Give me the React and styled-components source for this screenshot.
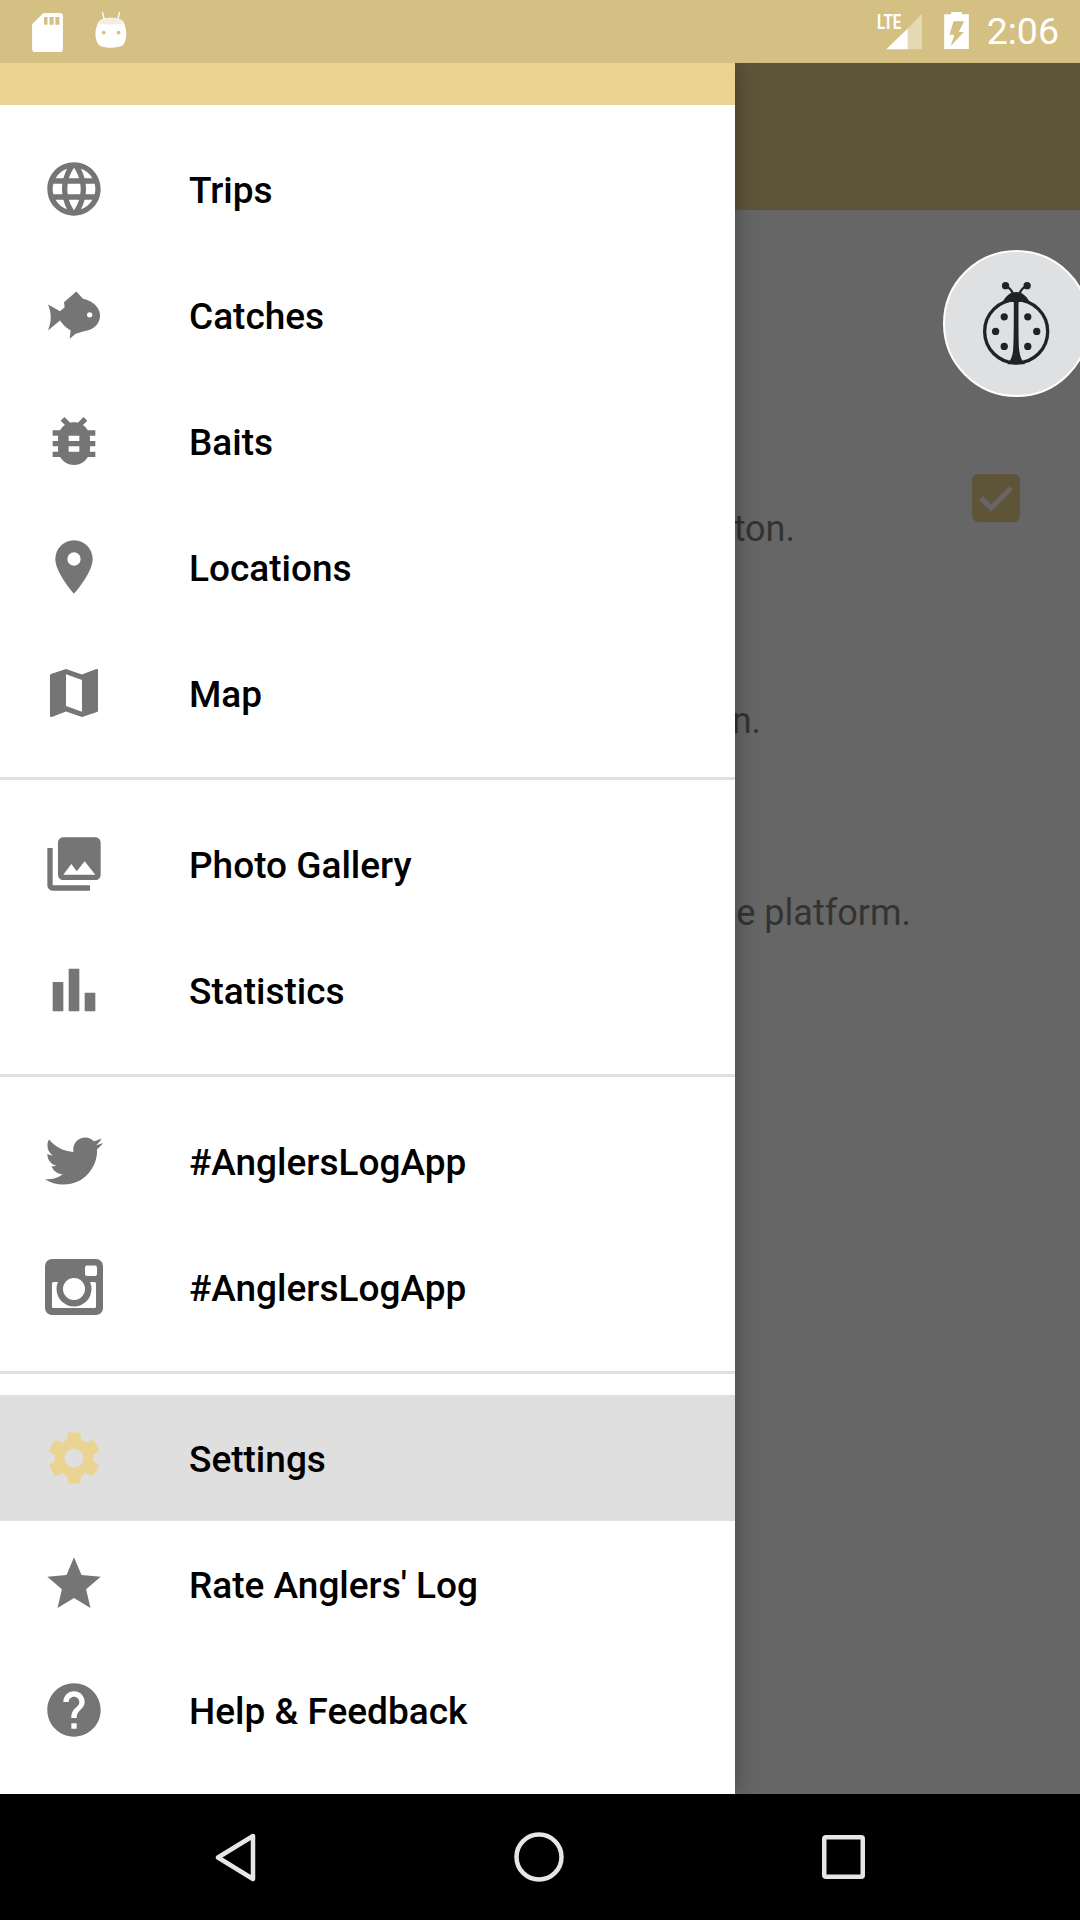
import React from "react";
import styled, { createGlobalStyle } from "styled-components";
import {
  MdLanguage, MdBugReport, MdPlace, MdMap, MdPhotoLibrary, MdBarChart, MdSettings, MdStar, MdHelp,
} from "react-icons/md";
import { FaTwitter } from "react-icons/fa";

const Global = createGlobalStyle`
  html, body { margin: 0; padding: 0; background: #000; }
  body { font-family: Roboto, "Liberation Sans", sans-serif; }
  * { box-sizing: border-box; }
`;

const Screen = styled.div`
  width: 1080px; height: 1920px; display: flex; flex-direction: column; overflow: hidden;
`;
const StatusBar = styled.header`
  flex: 0 0 63px; height: 63px; background: #d4c083; display: flex; align-items: flex-start;
  color: #fff; position: relative;
`;
const LeftIcons = styled.div`
  display: flex; align-items: flex-start; gap: 32px; padding: 11px 0 0 32px;
`;
const RightIcons = styled.div`
  margin-left: auto; display: flex; align-items: flex-start; padding: 11px 21px 0 0;
`;
const Time = styled.span`
  font-size: 37.5px; line-height: 42px; margin-left: 18px; margin-top: -1px; font-weight: 400;
`;
const Main = styled.div`
  flex: 1; display: flex; min-height: 0; overflow: hidden;
`;
const Drawer = styled.nav`
  flex: 0 0 735px; background: #fff; display: flex; flex-direction: column; position: relative; z-index: 2;
  box-shadow: 0 0 22px rgba(0, 0, 0, 0.32);
`;
const DrawerHeader = styled.div`
  flex: 0 0 42px; background: #ebd391;
`;
const Section = styled.div`
  padding: 21px 0;
  &:not(:last-child) { border-bottom: 3px solid #e0e0e0; }
`;
const Row = styled.div`
  height: 126px; display: flex; align-items: center; background: ${(p) => (p.$active ? "#dfdfdf" : "transparent")};
`;
const IconSlot = styled.div`
  flex: 0 0 147px; height: 100%; display: flex; align-items: center; justify-content: center;
  color: ${(p) => (p.$active ? "#ebd391" : "#757575")};
`;
const Label = styled.span`
  margin-left: 42px; margin-top: 4px; font-size: 37px; font-weight: 500; color: #000; line-height: 42px; white-space: nowrap;
`;
const Backdrop = styled.section`
  flex: 1; display: flex; flex-direction: column; background: #666; position: relative; min-width: 0;
`;
const Toolbar = styled.div`
  flex: 0 0 147px; background: #5e5539;
`;
const Content = styled.div`
  display: flex; flex-direction: column; padding-top: 262px;
`;
const ContentRow = styled.div`
  height: 192px; display: flex; align-items: flex-start;
`;
const Clipped = styled.div`
  flex: 0 0 ${(p) => p.$w}px; width: ${(p) => p.$w}px; overflow: hidden; display: flex; justify-content: flex-end;
  margin-top: 36px; font-size: 36px; line-height: 42px; color: #333; white-space: nowrap;
`;
const Checkbox = styled.div`
  position: absolute; top: 411px; left: 237px; width: 48px; height: 48px; border-radius: 6px; background: #5e5539;
  display: flex; align-items: center; justify-content: center;
`;
const Fab = styled.div`
  position: absolute; top: 187px; right: -10px; width: 147px; height: 147px; border-radius: 50%;
  background: #dfe0e2; border: 2px solid #fff; display: flex; align-items: center; justify-content: center;
`;
const NavBar = styled.footer`
  flex: 0 0 126px; background: #000; display: flex; align-items: center; justify-content: center; gap: 258px;
`;

const Fish = () => (
  <svg width="60" height="57" viewBox="70 20 180 170">
    <path d="M82 72 L118 92 L132 80 L130 65 L167 33 L187 55 C218 62 238 82 238 105 C238 132 218 148 190 152 L165 160 L147 175 L150 150 C136 142 126 132 118 120 L82 150 C92 125 94 100 82 72 Z" fill="currentColor" />
    <circle cx="207" cy="103" r="8" fill="#fff" />
  </svg>
);
const Instagram = () => (
  <svg width="58" height="56" viewBox="0 0 58 56">
    <rect width="58" height="56" rx="7" fill="currentColor" />
    <rect x="7" y="23" width="44" height="26" rx="1.5" fill="#fff" />
    <rect x="40" y="6.500" width="12" height="10.500" rx="2" fill="#fff" />
    <circle cx="29" cy="30" r="17.500" fill="currentColor" />
    <circle cx="29" cy="30" r="11" fill="#fff" />
  </svg>
);
const Ladybug = () => (
  <svg width="73" height="88" viewBox="780 150 220 265" fill="#212226">
    <circle cx="889" cy="305" r="95" fill="none" stroke="#212226" strokeWidth="10" />
    <path d="M846 220 C856 200 870 186 889 186 C908 186 922 200 932 220 C915 210 902 212 896 218 C896 280 896 340 898 360 C900 380 906 394 916 404 H862 C872 394 878 380 880 360 C882 340 882 280 882 218 C876 212 863 210 846 220 Z" />
    <path d="M880 194 C876 180 868 172 857 168 M898 194 C902 180 910 172 921 168" fill="none" stroke="#212226" strokeWidth="7" />
    <circle cx="857" cy="167" r="11" /><circle cx="922" cy="167" r="11" />
    <circle cx="853" cy="261" r="11" /><circle cx="924" cy="261" r="11" />
    <circle cx="827" cy="305" r="11" /><circle cx="951" cy="305" r="11" />
    <circle cx="853" cy="350" r="11" /><circle cx="924" cy="350" r="11" />
  </svg>
);

const groups = [
  [["Trips", <MdLanguage size={64} />], ["Catches", <Fish />], ["Baits", <MdBugReport size={64} />], ["Locations", <MdPlace size={64} />], ["Map", <MdMap size={64} />]],
  [["Photo Gallery", <MdPhotoLibrary size={64} />], ["Statistics", <MdBarChart size={64} />]],
  [["#AnglersLogApp", <FaTwitter size={58} />], ["#AnglersLogApp", <Instagram />]],
  [["Settings", <MdSettings size={64} />, true], ["Rate Anglers' Log", <MdStar size={64} />], ["Help & Feedback", <MdHelp size={64} />]],
];

export default function App() {
  return (
    <Screen>
      <Global />
      <StatusBar>
        <LeftIcons>
          <svg width="31" height="39" viewBox="97 38 90 114" style={{ marginTop: 2 }}>
            <path d="M130 38 H178 A9 9 0 0 1 187 47 V143 A9 9 0 0 1 178 152 H106 A9 9 0 0 1 97 143 V71 Z" fill="#fff" />
            <path d="M132 50 H142 V72 H132 Z M148 50 H160 V72 H148 Z M165 50 H177 V72 H165 Z" fill="#d4c083" />
          </svg>
          <svg width="32" height="37" viewBox="284 30 95 110">
            <path d="M306 33 L311 54 M357 33 L352 54" stroke="#fff" strokeWidth="4" />
            <path d="M295 62 C305 46 358 46 368 62 C380 85 380 115 368 130 C355 142 305 142 295 130 C282 115 282 85 295 62 Z" fill="#fff" />
            <path d="M293 66 C305 46 358 46 370 66 C350 72 312 72 293 66 Z" fill="#f3eedf" />
            <circle cx="310" cy="94" r="5.500" fill="#d4c083" /><circle cx="354" cy="94" r="5.500" fill="#d4c083" />
          </svg>
        </LeftIcons>
        <RightIcons>
          <svg width="47" height="38" viewBox="465 35 140 115" style={{ marginTop: 1 }}>
            <text x="467" y="87" fontFamily="Roboto, sans-serif" fontWeight="700" fontSize="62" textLength="73" lengthAdjust="spacingAndGlyphs" fill="#fff">LTE</text>
            <path d="M495 148 L560 85 V148 Z" fill="#fff" />
            <path d="M560 85 L603 40 V148 H560 Z" fill="#fff" fillOpacity="0.4" />
          </svg>
          <svg width="25" height="37" viewBox="669 37 74 111" style={{ marginLeft: 21, marginTop: 1 }}>
            <path d="M690 37 H722 V44 H743 V148 H669 V44 H690 Z" fill="#fff" />
            <path d="M697 65 H729 L713 97 H728 L688 140 L700 105 H685 Z" fill="#d4c083" />
          </svg>
          <Time>2:06</Time>
        </RightIcons>
      </StatusBar>
      <Main>
        <Drawer>
          <DrawerHeader />
          {groups.map((g, i) => (
            <Section key={i}>
              {g.map(([label, icon, active]) => (
                <Row key={label + icon.type} $active={active}>
                  <IconSlot $active={active}>{icon}</IconSlot>
                  <Label>{label}</Label>
                </Row>
              ))}
            </Section>
          ))}
        </Drawer>
        <Backdrop>
          <Toolbar />
          <Content>
            <ContentRow><Clipped $w={60}>button.</Clipped></ContentRow>
            <ContentRow><Clipped $w={26}>screen.</Clipped></ContentRow>
            <ContentRow><Clipped $w={176}>the platform.</Clipped></ContentRow>
          </Content>
          <Checkbox>
            <svg width="36" height="28" viewBox="0 0 36 28">
              <path d="M3 14 L13 24 L33 4" fill="none" stroke="#666" strokeWidth="5" />
            </svg>
          </Checkbox>
          <Fab><Ladybug /></Fab>
        </Backdrop>
      </Main>
      <NavBar>
        <svg width="41" height="49" viewBox="0 0 41 49">
          <path d="M38 3 V46 L3 24.500 Z" fill="none" stroke="#e6e6e6" strokeWidth="4.500" strokeLinejoin="round" />
        </svg>
        <svg width="50" height="50" viewBox="0 0 50 50">
          <circle cx="25" cy="25" r="22.500" fill="none" stroke="#e6e6e6" strokeWidth="4.500" />
        </svg>
        <svg width="43" height="44" viewBox="0 0 43 44">
          <rect x="2.250" y="2.250" width="38.500" height="39.500" rx="1.500" fill="none" stroke="#e6e6e6" strokeWidth="4.500" />
        </svg>
      </NavBar>
    </Screen>
  );
}
